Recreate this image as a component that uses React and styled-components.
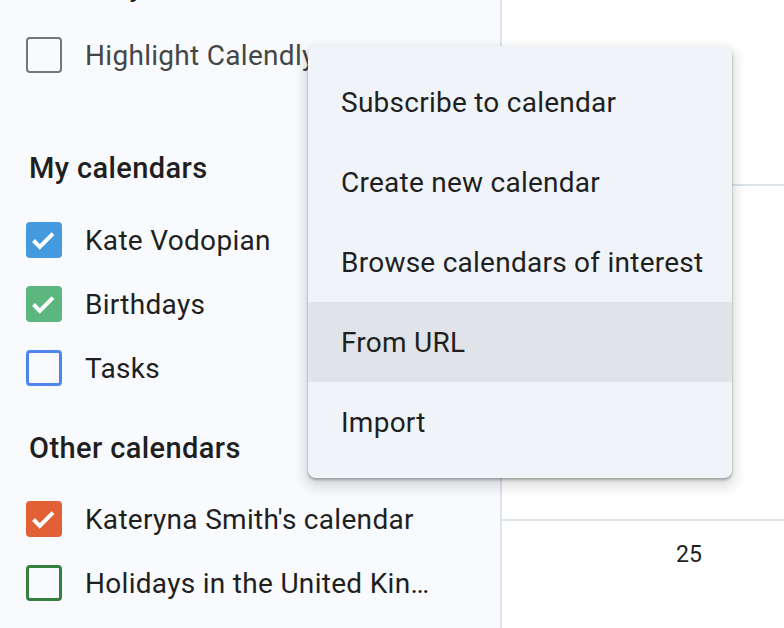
import styled, { createGlobalStyle } from 'styled-components'

const GlobalStyle = createGlobalStyle`
  html, body {
    margin: 0;
    padding: 0;
    width: 784px;
    height: 628px;
    overflow: hidden;
    background: #ffffff;
    font-family: Roboto, "Liberation Sans", sans-serif;
  }
`

const Page = styled.div`
  position: relative;
  display: flex;
  width: 784px;
  height: 628px;
  overflow: hidden;
`

const Sidebar = styled.aside`
  width: 500px;
  flex-shrink: 0;
  background: #f8fafd;
  border-right: 2px solid #dde3ea;
  overflow: hidden;
`

const SidebarInner = styled.div`
  margin-top: -42px;
  padding-left: 26px;
`

const Section = styled.section`
  margin-bottom: ${(p) => p.gap}px;
`

const Heading = styled.h3`
  margin: 0 0 ${(p) => p.after}px 3px;
  height: 56px;
  display: flex;
  align-items: center;
  font-size: 29px;
  font-weight: 500;
  letter-spacing: 0.4px;
  color: #1f1f1f;
`

const Row = styled.div`
  height: 64px;
  display: flex;
  align-items: center;
  gap: 23px;
`

const Box = styled.span`
  width: 36px;
  height: 36px;
  box-sizing: border-box;
  flex-shrink: 0;
  border-radius: 4px;
  display: flex;
  align-items: center;
  justify-content: center;
  background: ${(p) => (p.checked ? p.color : 'transparent')};
  border: ${(p) => (p.checked ? 'none' : `${p.thin ? 2.5 : 3.5}px solid ${p.color}`)};
`

const Label = styled.span`
  font-size: 28px;
  letter-spacing: 0.3px;
  color: ${(p) => (p.muted ? '#444746' : '#1f1f1f')};
  max-width: 345px;
  white-space: nowrap;
  overflow: hidden;
  text-overflow: ellipsis;
`

const Main = styled.main`
  flex: 1;
  display: grid;
  grid-template-rows: 186px 335px 1fr;
  background: #ffffff;
`

const Cell = styled.div`
  border-bottom: ${(p) => (p.line ? '2px solid #dde3ea' : 'none')};
  display: flex;
  align-items: flex-start;
  padding-left: 174px;
`

const DayNumber = styled.span`
  margin-top: 20px;
  font-size: 23px;
  color: #1f1f1f;
`

const Menu = styled.ul`
  position: absolute;
  left: 308px;
  top: 46px;
  width: 424px;
  margin: 0;
  padding: 16px 0;
  list-style: none;
  background: #f0f4f9;
  border-radius: 8px;
  box-shadow: 0 2px 3px rgba(0, 0, 0, 0.3), 0 6px 12px 4px rgba(0, 0, 0, 0.12);
`

const MenuItem = styled.li`
  height: 80px;
  display: flex;
  align-items: center;
  padding-left: 33px;
  font-size: 28px;
  letter-spacing: 0.25px;
  color: #1f1f1f;
  background: ${(p) => (p.active ? '#e0e3e8' : 'transparent')};
`

function Check() {
  return (
    <svg width="36" height="36" viewBox="0 0 36 36">
      <path d="M7.5 18.5 L13.8 24.8 L27 11.6" fill="none" stroke="#ffffff" strokeWidth="4" />
    </svg>
  )
}

function CalendarRow({ name, color, checked, thin, muted }) {
  return (
    <Row>
      <Box color={color} checked={checked} thin={thin}>
        {checked && <Check />}
      </Box>
      <Label muted={muted}>{name}</Label>
    </Row>
  )
}

const menuItems = [
  'Subscribe to calendar',
  'Create new calendar',
  'Browse calendars of interest',
  'From URL',
  'Import',
]

export default function App() {
  return (
    <Page>
      <GlobalStyle />
      <Sidebar>
        <SidebarInner>
          <Section gap={53}>
            <Heading after={9}>Calendly</Heading>
            <CalendarRow name="Highlight Calendly events" color="#747775" thin muted />
          </Section>
          <Section gap={20}>
            <Heading after={12}>My calendars</Heading>
            <CalendarRow name="Kate Vodopian" color="#4599df" checked />
            <CalendarRow name="Birthdays" color="#5bb77e" checked />
            <CalendarRow name="Tasks" color="#4f86ec" />
          </Section>
          <Section gap={0}>
            <Heading after={11}>Other calendars</Heading>
            <CalendarRow name="Kateryna Smith's calendar" color="#e35f35" checked />
            <CalendarRow name="Holidays in the United Kingdom" color="#33803f" />
          </Section>
        </SidebarInner>
      </Sidebar>
      <Main>
        <Cell line />
        <Cell line />
        <Cell>
          <DayNumber>25</DayNumber>
        </Cell>
      </Main>
      <Menu>
        {menuItems.map((item) => (
          <MenuItem key={item} active={item === 'From URL'}>
            {item}
          </MenuItem>
        ))}
      </Menu>
    </Page>
  )
}
